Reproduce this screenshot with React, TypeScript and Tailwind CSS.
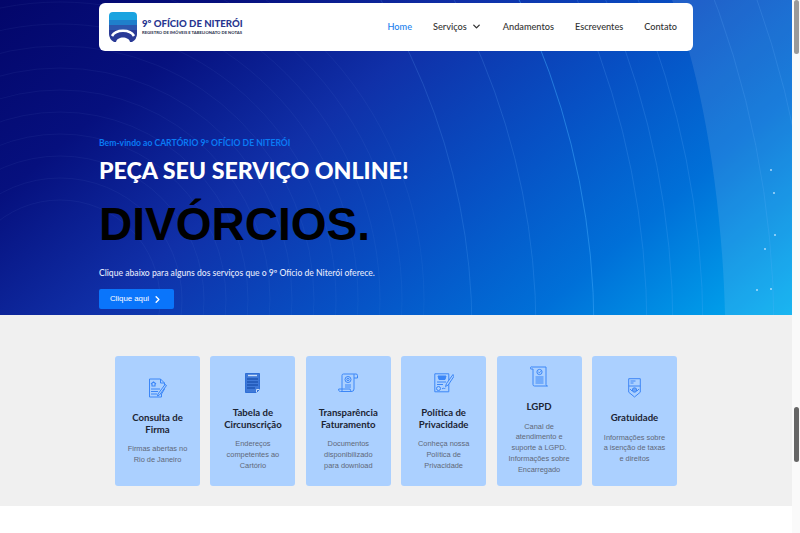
import { ChevronDown, ChevronRight } from 'lucide-react'

const jost = "font-['Lato','Noto_Sans',sans-serif]"

const IconFirma = () => (
  <svg width="20" height="20" viewBox="0 0 20 20" fill="none" stroke="#3b86f7" strokeWidth="1">
    <path d="M1.5 1h11l4 4v6l-3 5v3h-12z" />
    <path d="M12.5 1v4h4" />
    <path d="M3 6l2.5-2L8 6M4 6v2h3V6" strokeWidth="1.1" />
    <path d="M3 11h9M3 13.5h7M3 16h6" />
    <path d="M18.5 7.5L11.5 17l-2 1 .5-2L17 6.5z" fill="#abd0ff" />
  </svg>
)

const IconTabela = () => (
  <svg width="15" height="20" viewBox="0 0 15 20" fill="none">
    <path d="M.5.5h14v16l-3 3H.5z" fill="#3f79d8" stroke="#2f6fd6" />
    <path d="M3 2.5h9" stroke="#c9def9" strokeWidth="1.4" />
    <path d="M2 6h11M2 9h11M2 12h11M2 15h8" stroke="#1f56b4" strokeWidth="1.5" />
    <path d="M11.5 19.5v-3h3" stroke="#c9def9" />
  </svg>
)

const IconTransparencia = () => (
  <svg width="20" height="20" viewBox="0 0 20 20" fill="none" stroke="#3b86f7" strokeWidth="1">
    <path d="M4 18V2.5A1.5 1.5 0 0 1 5.5 1H18a1.5 1.5 0 0 1 1.5 1.5V5H16" />
    <path d="M16 1.2V16a2.5 2.5 0 0 1-2.5 2.5H2.5A1.8 1.8 0 0 1 .7 16h11.5c0 1.2.6 2.5 1.8 2.5" />
    <circle cx="10" cy="6.5" r="3" />
    <circle cx="10" cy="6.5" r="1.2" />
    <path d="M7 12h6M7 14h6" />
  </svg>
)

const IconPolitica = () => (
  <svg width="20" height="20" viewBox="0 0 20 20" fill="none" stroke="#3b86f7" strokeWidth="1">
    <path d="M.8.8h14v18H.8z" />
    <path d="M4 3h8l-1 3.5H5z" fill="#3b86f7" />
    <path d="M3 9h9M3 11.5h6" />
    <circle cx="4.5" cy="15.5" r="2" />
    <path d="M8 16c1.5-2 2 .5 3.5-1" />
    <path d="M19 1.5l-6.5 9-1 3 2.7-1.5 6-9z" fill="#abd0ff" />
  </svg>
)

const IconLgpd = () => (
  <svg width="18" height="21" viewBox="0 0 18 21" fill="none" stroke="#3b86f7" strokeWidth="1">
    <path d="M3 1h13v17.5a1.5 1.5 0 0 0 1.5 1.5H4.5A1.5 1.5 0 0 1 3 18.5V3H.7A1.2 1.2 0 0 1 2 1z" />
    <circle cx="9.5" cy="6" r="2.6" />
    <path d="M8.4 6l.9.9 1.4-1.6" />
    <path d="M5.5 11h8M5.5 13h8M5.5 15h8M5.5 17h8" strokeWidth="1.2" />
  </svg>
)

const IconGratuidade = () => (
  <svg width="13" height="20" viewBox="0 0 13 20" fill="none" stroke="#3f86f5" strokeWidth="1">
    <path d="M.7.7h11.6v13.5L6.5 19 .7 14.2z" />
    <path d="M2.5 3h5M2.5 5h3" />
    <path d="M.7 8h11.6" />
    <circle cx="6.5" cy="12" r="2.2" fill="#6aa4f5" />
    <path d="M2 11l2 2M11 11l-2 2" />
  </svg>
)

const cards = [
  { title: ['Consulta de', 'Firma'], text: ['Firmas abertas no', 'Rio de Janeiro'], icon: <IconFirma />, top: 'pt-[21px]' },
  { title: ['Tabela de', 'Circunscrição'], text: ['Endereços', 'competentes ao', 'Cartório'], icon: <IconTabela />, top: 'pt-[16px]' },
  { title: ['Transparência', 'Faturamento'], text: ['Documentos', 'disponibilizado', 'para download'], icon: <IconTransparencia />, top: 'pt-[16px]' },
  { title: ['Política de', 'Privacidade'], text: ['Conheça nossa', 'Política de', 'Privacidade'], icon: <IconPolitica />, top: 'pt-[16px]' },
  { title: ['LGPD'], text: ['Canal de', 'atendimento e', 'suporte à LGPD.', 'Informações sobre', 'Encarregado'], icon: <IconLgpd />, top: 'pt-[10px]' },
  { title: ['Gratuidade'], text: ['Informações sobre', 'a isenção de taxas', 'e direitos'], icon: <IconGratuidade />, top: 'pt-[21px]' },
]

function HeroLines() {
  const wide = [643, 707, 818, 844, 874, 945, 985]
  const near = [100, 122, 144, 166, 188, 210, 232, 254, 276, 298, 320, 342, 364]
  const dots = [[771, 170], [774, 193], [775, 235], [765, 249], [757, 290], [771, 289]]
  return (
    <svg className="absolute inset-0 h-full w-full" viewBox="0 0 792 315" fill="none">
      <path d="M672 0C700 70 722 190 725 315H792V0Z" fill="#ffffff" fillOpacity="0.1" />
      {near.map((r) => (
        <circle key={r} cx="60" cy="300" r={r} stroke="#a8c8ff" strokeOpacity="0.07" strokeWidth="0.8" />
      ))}
      {wide.map((r) => (
        <circle key={r} cx="-171" cy="330" r={r} stroke="#6db8ff" strokeOpacity="0.18" strokeWidth="1" />
      ))}
      <circle cx="-171" cy="330" r="765" stroke="#3aa2f5" strokeOpacity="0.55" strokeWidth="1" />
      {dots.map(([x, y]) => (
        <circle key={x + y} cx={x} cy={y} r="1" fill="#cfeaff" fillOpacity="0.8" />
      ))}
    </svg>
  )
}

function Logo() {
  return (
    <div className="flex items-center gap-[5px]">
      <svg width="28" height="30" viewBox="0 0 28 30">
        <defs>
          <clipPath id="logo-shape">
            <path d="M4 0H24Q28 0 28 4V22Q28 27 23 30H5Q0 27 0 22V4Q0 0 4 0Z" />
          </clipPath>
        </defs>
        <g clipPath="url(#logo-shape)">
          <rect width="28" height="8" fill="#1aa3e0" />
          <rect y="8" width="28" height="5" fill="#1f7fcb" />
          <rect y="13" width="28" height="5" fill="#2c56ae" />
          <rect y="18" width="28" height="12" fill="#2a3a96" />
          <path d="M3 24C7 17 21 17 25 24" fill="none" stroke="#ffffff" strokeWidth="2.6" />
          <path d="M7 30C8 24 20 24 21 30Z" fill="#ffffff" />
        </g>
      </svg>
      <div className="flex flex-col">
        <span className={`${jost} text-[9.6px] font-black leading-[12px] text-[#27358f] whitespace-nowrap`}>9º OFÍCIO DE NITERÓI</span>
        <span className={`${jost} text-[4.2px] font-black leading-[6px] text-[#333a55] whitespace-nowrap`}>REGISTRO DE IMÓVEIS E TABELIONATO DE NOTAS</span>
      </div>
    </div>
  )
}

export default function App() {
  return (
    <div className="relative h-[533px] w-[800px] overflow-hidden bg-white">
      <div className="w-[792px]">
        <section className="relative h-[315px] bg-[linear-gradient(140deg,#03066a_0%,#06107e_20%,#1030a8_40%,#0750c4_60%,#0070d8_78%,#00aef0_100%)]">
          <HeroLines />
          <div className="relative mx-auto w-[594px] pt-[3px]">
            <nav className="flex h-[48px] items-center justify-between rounded-[6px] bg-white pl-[10px] pr-[16px]">
              <Logo />
              <ul className={`${jost} flex items-center gap-[21px] text-[9.2px] font-medium text-[#333]`}>
                <li className="text-[#1a7fee]">Home</li>
                <li className="flex items-center gap-[4px]">Serviços <ChevronDown size={11} strokeWidth={3} /></li>
                <li>Andamentos</li>
                <li>Escreventes</li>
                <li>Contato</li>
              </ul>
            </nav>
            <p className={`${jost} mt-[86px] text-[8.6px] font-bold leading-[13px] text-[#0a7bf5]`}>Bem-vindo ao CARTÓRIO 9º OFÍCIO DE NITERÓI</p>
            <h1 className={`${jost} mt-[5px] text-[23.2px] font-black leading-[30px] text-white whitespace-nowrap`}>PEÇA SEU SERVIÇO ONLINE!</h1>
            <h2 className="mt-[12px] font-['Liberation_Sans',sans-serif] text-[46px] font-bold leading-[54px] text-black">DIVÓRCIOS.</h2>
            <p className={`${jost} mt-[15px] text-[8.6px] font-medium leading-[14px] text-[#e4e9fb]`}>Clique abaixo para alguns dos serviços que o 9º Ofício de Niterói oferece.</p>
            <button className="mt-[9px] flex h-[20px] w-[75px] items-center justify-center gap-[3px] rounded-[2px] bg-[#0a75fb] font-['Liberation_Sans',sans-serif] text-[7.8px] text-white">
              Clique aqui <ChevronRight size={11} strokeWidth={3} />
            </button>
          </div>
        </section>
        <section className="flex h-[191px] justify-center gap-[10.4px] bg-[#f0f0f0] pt-[41px]">
          {cards.map((c) => (
            <div key={c.title[0]} className={`flex h-[130px] w-[85px] flex-col items-center rounded-[3px] bg-[#abd0ff] text-center ${c.top}`}>
              <div className="flex h-[21px] items-center justify-center">{c.icon}</div>
              <h3 className={`${jost} mt-[14px] text-[9.6px] font-bold leading-[11.5px] text-[#1c2433] whitespace-nowrap`}>
                {c.title.map((t) => <div key={t}>{t}</div>)}
              </h3>
              <p className="mt-[9px] font-['Liberation_Sans',sans-serif] text-[7.4px] leading-[10.8px] text-[#5f6878] whitespace-nowrap">
                {c.text.map((t) => <span key={t} className="block">{t}</span>)}
              </p>
            </div>
          ))}
        </section>
        <section className="h-[27px] bg-white" />
      </div>
      <div className="absolute right-0 top-0 h-full w-[8px] bg-[#fafafa]">
        <div className="absolute right-[1.5px] top-0 h-[54px] w-[5px] rounded-full bg-[#9a9a9a]" />
        <div className="absolute right-[1.5px] top-[407px] h-[55px] w-[5px] rounded-full bg-[#666]" />
      </div>
    </div>
  )
}
